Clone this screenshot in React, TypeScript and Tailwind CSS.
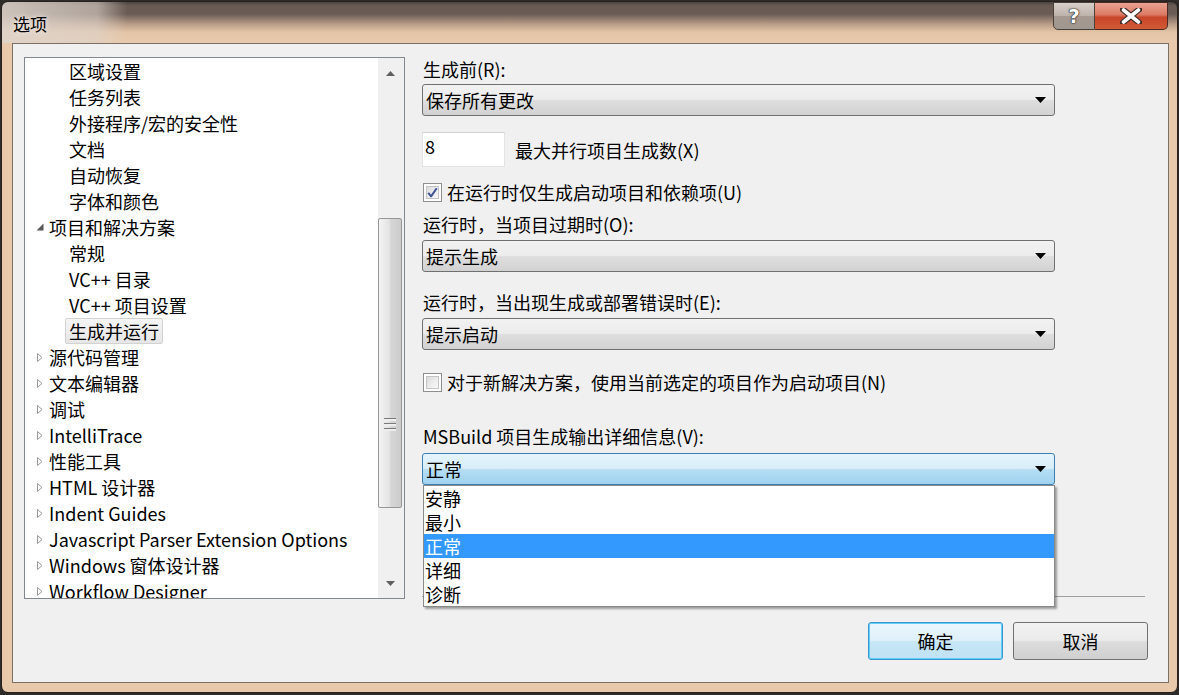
import React from "react";

const FONT = "font-['Noto_Sans_CJK_SC','Noto_Sans',sans-serif]";

type Row = { t: string; l: number; exp?: boolean; sel?: boolean };

const rows: Row[] = [
  { t: "区域设置", l: 1 },
  { t: "任务列表", l: 1 },
  { t: "外接程序/宏的安全性", l: 1 },
  { t: "文档", l: 1 },
  { t: "自动恢复", l: 1 },
  { t: "字体和颜色", l: 1 },
  { t: "项目和解决方案", l: 0, exp: true },
  { t: "常规", l: 1 },
  { t: "VC++ 目录", l: 1 },
  { t: "VC++ 项目设置", l: 1 },
  { t: "生成并运行", l: 1, sel: true },
  { t: "源代码管理", l: 0 },
  { t: "文本编辑器", l: 0 },
  { t: "调试", l: 0 },
  { t: "IntelliTrace", l: 0 },
  { t: "性能工具", l: 0 },
  { t: "HTML 设计器", l: 0 },
  { t: "Indent Guides", l: 0 },
  { t: "Javascript Parser Extension Options", l: 0 },
  { t: "Windows 窗体设计器", l: 0 },
  { t: "Workflow Designer", l: 0 },
];

function Collapsed() {
  return (
    <svg width="8" height="11" viewBox="0 0 8 11">
      <path d="M1.5 1.5 L6 5.5 L1.5 9.5 Z" fill="#ffffff" stroke="#9a9a9a" strokeWidth="1" />
    </svg>
  );
}

function Expanded() {
  return (
    <svg width="8" height="8" viewBox="0 0 8 8">
      <path d="M7.5 0.5 L7.5 7.5 L0.5 7.5 Z" fill="#595959" />
    </svg>
  );
}

function DownArrow() {
  return (
    <svg width="11" height="6" viewBox="0 0 11 6">
      <path d="M0 0 L11 0 L5.5 6 Z" fill="#000" />
    </svg>
  );
}

function Combo({ text, focused }: { text: string; focused?: boolean }) {
  return (
    <div
      className={
        "w-[633px] h-[32px] rounded-[3px] border flex items-center justify-between pl-[3px] pr-[8px] " +
        (focused
          ? "border-[#3c7fb1] bg-[linear-gradient(to_bottom,#e5f4fc_0%,#d8eef9_48%,#b6def5_52%,#9fd2f0_100%)]"
          : "border-[#707070] bg-[linear-gradient(to_bottom,#f2f2f2_0%,#ececec_48%,#dedede_52%,#d2d2d2_100%)]")
      }
    >
      <span className="text-[18px] leading-[26px] text-black">{text}</span>
      <DownArrow />
    </div>
  );
}

function CheckBox({ checked }: { checked?: boolean }) {
  return (
    <div className="w-[19px] h-[19px] border border-[#8e8f8f] bg-white p-[2px] shrink-0">
      <div className="w-full h-full border border-[#c4c4c4] bg-[linear-gradient(135deg,#dadada_0%,#ebebeb_50%,#fafafa_100%)] flex items-center justify-center">
        {checked && (
          <svg width="13" height="13" viewBox="0 0 13 13">
            <path d="M1.5 7 L4.8 11 L11.5 1.5" fill="none" stroke="#3f5493" strokeWidth="2.4" strokeLinejoin="round" />
          </svg>
        )}
      </div>
    </div>
  );
}

export default function App() {
  return (
    <div className={"w-[1179px] h-[695px] overflow-hidden bg-[#2e2b29] " + FONT}>
      <div className="ml-[1px] mt-[1px] w-[1177px] h-[692px] rounded-[7px] border border-[#27221f] bg-[linear-gradient(to_bottom,#4b4440_0px,#6a5c55_4px,#6a5c55_12px,#b89c86_22px,#e3c4a6_30px,#e8c9ab_40px,#e8c9ab_100%)] flex flex-col">
        {/* Title bar */}
        <div className="h-[41px] flex items-start justify-between pl-[11px] pr-[9px] rounded-t-[6px] bg-[linear-gradient(to_right,rgba(222,212,204,0.85)_0px,rgba(222,212,204,0.6)_95px,rgba(222,212,204,0)_125px)]">
          <div className="pt-[11px] text-[17px] leading-[22px] text-black [text-shadow:0_0_6px_rgba(255,255,255,0.9)]">选项</div>
          <div className="flex h-[28px]">
            <div className="w-[42px] h-full border border-[#4a413b] rounded-bl-[5px] bg-[linear-gradient(to_bottom,#d8d0ca_0%,#bdb2aa_50%,#a59991_52%,#a09890_100%)] flex items-center justify-center">
              <span className="font-['DejaVu_Sans',sans-serif] font-bold text-[20px] leading-none text-white [text-shadow:0_0_1px_#222,0_0_1px_#222,0_0_2px_#222]">?</span>
            </div>
            <div className="w-[73px] h-full border border-l-0 border-[#4a2a22] rounded-br-[5px] bg-[linear-gradient(to_bottom,#e9a292_0%,#db7a64_45%,#c9452a_55%,#d05a35_100%)] flex items-center justify-center">
              <svg width="22" height="16" viewBox="0 0 22 16">
                <path d="M3 1.5 L19 14.5 M19 1.5 L3 14.5" stroke="#3a2a26" strokeWidth="6" strokeLinecap="round" fill="none" />
                <path d="M3.5 2 L18.5 14 M18.5 2 L3.5 14" stroke="#ffffff" strokeWidth="3.6" strokeLinecap="round" fill="none" />
              </svg>
            </div>
          </div>
        </div>

        {/* Client area */}
        <div className="ml-[10px] mr-[8px] h-[640px] border border-[#7b6f66] bg-[#f0f0f0] flex flex-col pl-[11px] pt-[13px] pr-[20px]">
          <div className="flex">
            {/* Tree */}
            <div className="w-[381px] h-[542px] border border-[#828790] bg-white flex">
              <div className="flex-1 overflow-hidden">
                {rows.map((r, i) => (
                  <div key={i} className="h-[26px] flex items-center text-[18px] leading-[26px] text-black whitespace-nowrap">
                    {r.l === 0 ? (
                      <>
                        <div className="ml-[10px] w-[9px] flex items-center justify-center">
                          {r.exp ? <Expanded /> : <Collapsed />}
                        </div>
                        <span className="ml-[5px]">{r.t}</span>
                      </>
                    ) : (
                      <span
                        className={
                          "ml-[40px] px-[3px] h-[26px] border rounded-[2px] leading-[24px] " +
                          (r.sel
                            ? "border-[#d2d2d2] bg-[linear-gradient(to_bottom,#f5f5f5,#e6e6e6)]"
                            : "border-transparent")
                        }
                      >
                        {r.t}
                      </span>
                    )}
                  </div>
                ))}
              </div>
              {/* Scrollbar */}
              <div className="w-[26px] h-full bg-[#f0f0f0] flex flex-col">
                <div className="h-[30px] flex items-center justify-center pr-[2px]">
                  <svg width="9" height="5" viewBox="0 0 9 5">
                    <path d="M0 5 L9 5 L4.5 0 Z" fill="#606060" />
                  </svg>
                </div>
                <div className="h-[130px]" />
                <div className="w-[24px] h-[290px] rounded-[2px] border border-[#979797] bg-[linear-gradient(to_right,#f4f4f4_0%,#e4e4e4_45%,#d6d6d6_55%,#cbcbcb_100%)] flex items-center justify-center">
                  <div className="mt-[122px] flex flex-col gap-[2px]">
                    <div className="w-[12px] h-[3px] bg-[#eeeeee] border-t border-[#7a7a7a]" />
                    <div className="w-[12px] h-[3px] bg-[#eeeeee] border-t border-[#7a7a7a]" />
                    <div className="w-[12px] h-[3px] bg-[#eeeeee] border-t border-[#7a7a7a]" />
                  </div>
                </div>
                <div className="flex-1" />
                <div className="h-[30px] flex items-center justify-center pr-[2px]">
                  <svg width="9" height="5" viewBox="0 0 9 5">
                    <path d="M0 0 L9 0 L4.5 5 Z" fill="#606060" />
                  </svg>
                </div>
              </div>
            </div>

            {/* Right panel */}
            <div className="ml-[17px] w-[723px] h-[542px] flex flex-col text-[18px] leading-[26px] text-black">
              <div className="mt-[1px] h-[26px] leading-[22px] pl-[1px]">生成前(R):</div>
              <Combo text="保存所有更改" />
              <div className="mt-[16px] flex items-center">
                <div className="w-[83px] h-[35px] bg-white border border-[#e3e3e3] border-t-[#d0d0d0] pl-[2px] leading-[26px]">8</div>
                <span className="ml-[10px] mt-[1px]">最大并行项目生成数(X)</span>
              </div>
              <div className="mt-[12px] h-[26px] flex items-center pl-[1px]">
                <CheckBox checked />
                <span className="ml-[5px]">在运行时仅生成启动项目和依赖项(U)</span>
              </div>
              <div className="mt-[8px] h-[26px] leading-[22px] pl-[1px]">运行时，当项目过期时(O):</div>
              <div className="mt-[1px]">
                <Combo text="提示生成" />
              </div>
              <div className="mt-[19px] h-[26px] leading-[22px] pl-[1px]">运行时，当出现生成或部署错误时(E):</div>
              <div className="mt-[1px]">
                <Combo text="提示启动" />
              </div>
              <div className="mt-[19px] h-[26px] flex items-center pl-[1px]">
                <CheckBox />
                <span className="ml-[5px]">对于新解决方案，使用当前选定的项目作为启动项目(N)</span>
              </div>
              <div className="mt-[30px] h-[26px] leading-[22px] pl-[1px]">MSBuild 项目生成输出详细信息(V):</div>
              <div className="mt-[2px] relative">
                <Combo text="正常" focused />
                <div className="absolute left-[1px] top-[32px] w-[632px] z-10 bg-white border border-[#8a8a8a] shadow-[2px_2px_2px_rgba(0,0,0,0.35)]">
                  {["安静", "最小", "正常", "详细", "诊断"].map((s) => (
                    <div
                      key={s}
                      className={
                        "h-[24px] leading-[24px] pl-[1px] " +
                        (s === "正常" ? "bg-[#3399ff] text-white" : "text-black")
                      }
                    >
                      {s}
                    </div>
                  ))}
                </div>
              </div>
              <div className="mt-auto mb-[2px] h-[1px] bg-[#a0a0a0]" />
            </div>
          </div>

          {/* Buttons */}
          <div className="mt-[23px] flex justify-end gap-[10px]">
            <div className="w-[135px] h-[38px] rounded-[3px] border border-[#3c95cf] shadow-[inset_0_0_0_1px_#5fd0f5] bg-[linear-gradient(to_bottom,#ebf6fc_0%,#dff0fa_48%,#c7e6f6_52%,#bfe2f4_100%)] flex items-center justify-center text-[18px] text-black">
              确定
            </div>
            <div className="w-[135px] h-[38px] rounded-[3px] border border-[#707070] bg-[linear-gradient(to_bottom,#f2f2f2_0%,#ebebeb_48%,#dddddd_52%,#cfcfcf_100%)] flex items-center justify-center text-[18px] text-black">
              取消
            </div>
          </div>
        </div>
      </div>
    </div>
  );
}
